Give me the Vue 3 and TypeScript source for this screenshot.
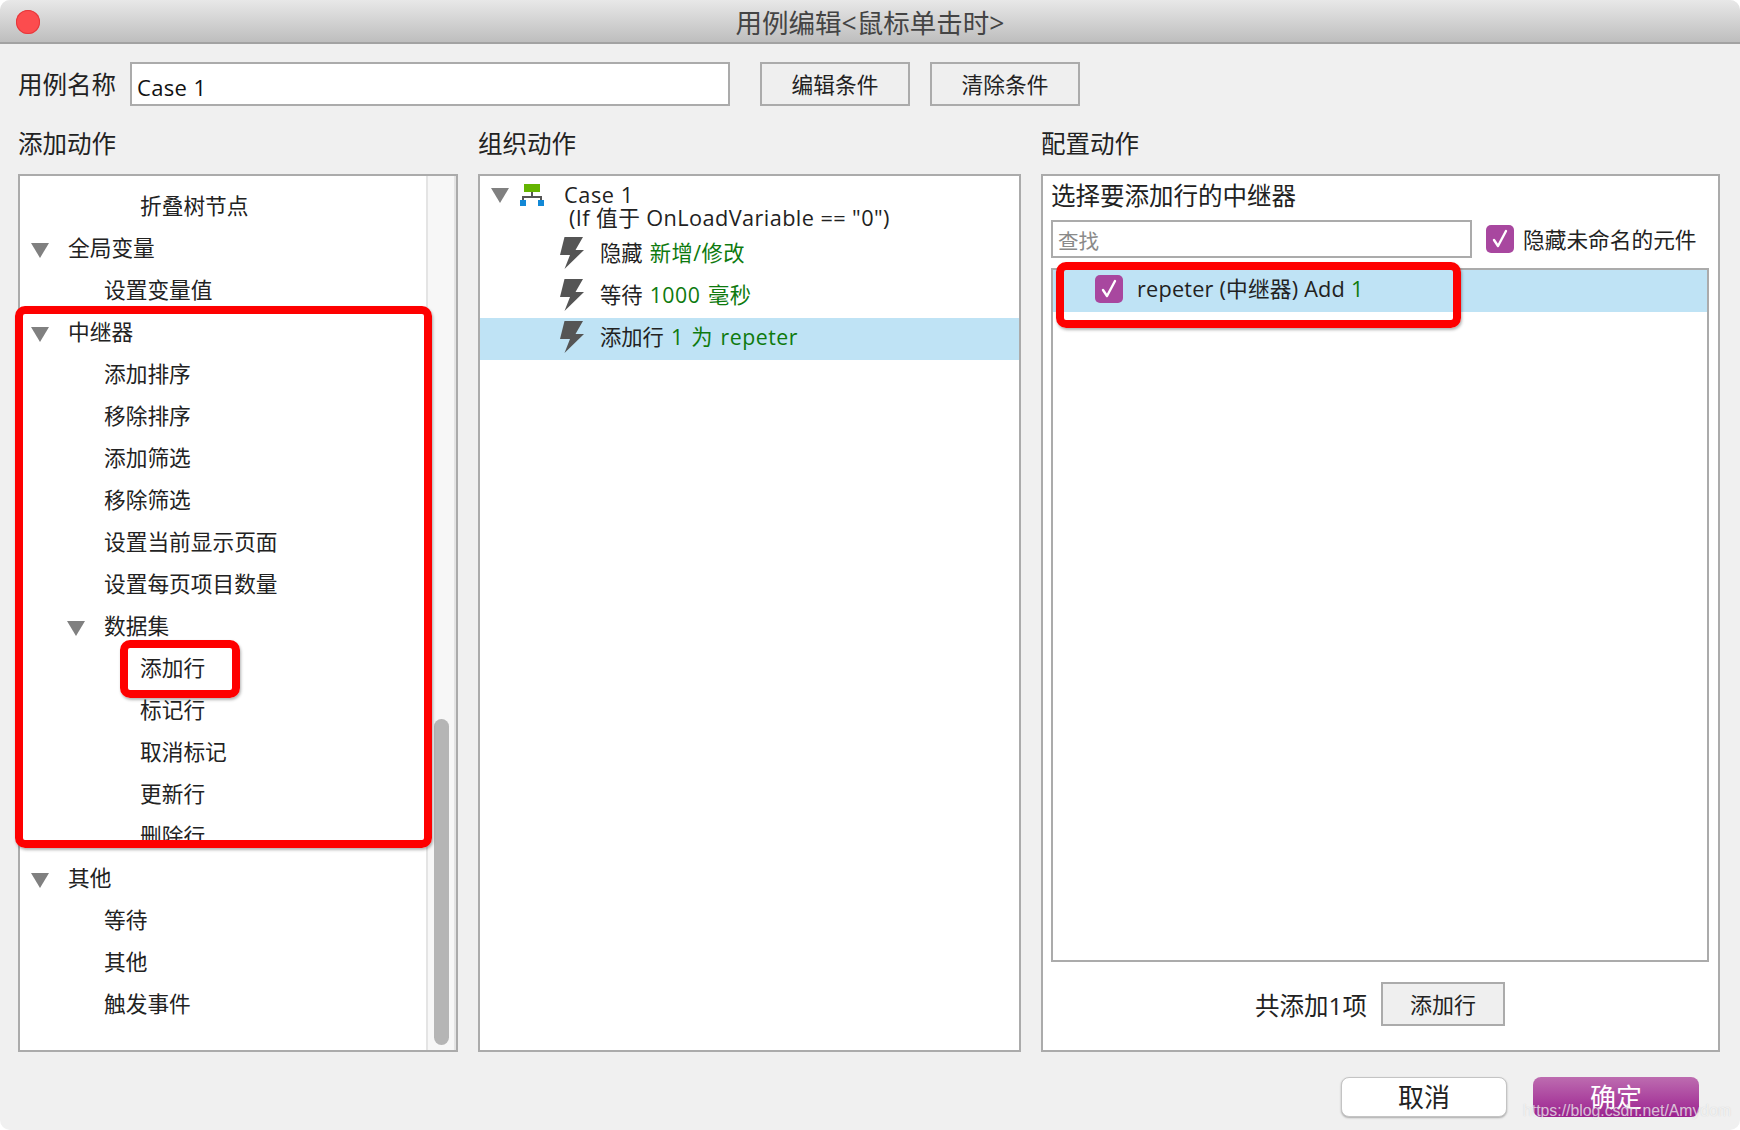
<script setup lang="ts">
interface TreeRow {
  label: string;
  level: number;
  open?: boolean;
}

const treeRows: TreeRow[] = [
  { label: "折叠树节点", level: 2 },
  { label: "全局变量", level: 0, open: true },
  { label: "设置变量值", level: 1 },
  { label: "中继器", level: 0, open: true },
  { label: "添加排序", level: 1 },
  { label: "移除排序", level: 1 },
  { label: "添加筛选", level: 1 },
  { label: "移除筛选", level: 1 },
  { label: "设置当前显示页面", level: 1 },
  { label: "设置每页项目数量", level: 1 },
  { label: "数据集", level: 1, open: true },
  { label: "添加行", level: 2 },
  { label: "标记行", level: 2 },
  { label: "取消标记", level: 2 },
  { label: "更新行", level: 2 },
  { label: "删除行", level: 2 },
  { label: "其他", level: 0, open: true },
  { label: "等待", level: 1 },
  { label: "其他", level: 1 },
  { label: "触发事件", level: 1 },
];

const actions = [
  { verb: "隐藏", target: "新增/修改", selected: false },
  { verb: "等待", target: "1000 毫秒", selected: false },
  { verb: "添加行", target: "1 为 repeter", selected: true },
];
</script>

<template>
  <div class="dialog">
    <header class="titlebar">
      <span class="close-dot"></span>
      <span class="title">用例编辑&lt;鼠标单击时&gt;</span>
    </header>

    <div class="name-row">
      <label class="name-label">用例名称</label>
      <div class="field name-field">Case 1</div>
      <button class="btn btn-edit">编辑条件</button>
      <button class="btn btn-clear">清除条件</button>
    </div>

    <div class="columns">
      <section class="col col-add">
        <h2>添加动作</h2>
        <div class="panel tree-panel">
          <ul class="tree">
            <li v-for="(row, i) in treeRows" :key="i" class="tree-row" :class="`level-${row.level}`">
              <i v-if="row.open" class="caret"></i>
              <span>{{ row.label }}</span>
            </li>
          </ul>
          <div class="scroll-track"><div class="scroll-thumb"></div></div>
        </div>
      </section>

      <section class="col col-organize">
        <h2>组织动作</h2>
        <div class="panel organize-panel">
          <div class="case-row">
            <i class="caret"></i>
            <svg class="case-icon" width="24" height="22" viewBox="0 0 24 22">
              <rect x="4" y="0" width="16" height="8" fill="#64b400" />
              <path d="M12 8v5M3 16v-3h18v3" fill="none" stroke="#555" stroke-width="2" />
              <rect x="0" y="16" width="6" height="6" fill="#1288d6" />
              <rect x="18" y="16" width="6" height="6" fill="#1288d6" />
            </svg>
            <div class="case-text">
              <div class="case-name">Case 1</div>
              <div class="case-cond">(If 值于 OnLoadVariable == "0")</div>
            </div>
          </div>
          <div v-for="a in actions" :key="a.verb" class="action-row" :class="{ selected: a.selected }">
            <svg class="bolt" width="24" height="32" viewBox="0 0 24 32">
              <path d="M4.5 0H23L15.5 13H24L4.5 32L10 18H0Z" fill="#555" />
            </svg>
            <span class="action-text">{{ a.verb }} <em>{{ a.target }}</em></span>
          </div>
        </div>
      </section>

      <section class="col col-config">
        <h2>配置动作</h2>
        <div class="panel config-panel">
          <div class="config-title">选择要添加行的中继器</div>
          <div class="search-row">
            <div class="field search-field">查找</div>
            <span class="check">
              <svg width="18" height="20" viewBox="0 0 18 20"><path d="M3 11l4 6L15 2" fill="none" stroke="#fff" stroke-width="2.4" stroke-linecap="round" stroke-linejoin="round" /></svg>
            </span>
            <span class="check-label">隐藏未命名的元件</span>
          </div>
          <div class="widget-list">
            <div class="widget-row">
              <span class="check">
                <svg width="18" height="20" viewBox="0 0 18 20"><path d="M3 11l4 6L15 2" fill="none" stroke="#fff" stroke-width="2.4" stroke-linecap="round" stroke-linejoin="round" /></svg>
              </span>
              <span class="widget-text">repeter (中继器) Add <em>1</em></span>
            </div>
          </div>
          <div class="config-foot">
            <span>共添加1项</span>
            <button class="btn btn-add-row">添加行</button>
          </div>
        </div>
      </section>
    </div>

    <footer class="actions">
      <button class="mac-btn cancel">取消</button>
      <button class="mac-btn ok">确定</button>
    </footer>

    <div class="mark mark-repeater"></div>
    <div class="mark mark-addrow"></div>
    <div class="mark mark-widget"></div>
    <div class="watermark">https://blog.csdn.net/Amydom</div>
  </div>
</template>

<style>
html,
body {
  margin: 0;
  background: #fff;
  overflow: hidden;
}
</style>

<style scoped>
.dialog {
  position: relative;
  width: 1740px;
  height: 1130px;
  box-sizing: border-box;
  background: #f0f0f0;
  border-radius: 10px;
  overflow: hidden;
  font-family: "Open Sans", "Noto Sans CJK SC", sans-serif;
  font-size: 21.7px;
  color: #222;
}

.titlebar {
  height: 44px;
  box-sizing: border-box;
  display: flex;
  align-items: center;
  justify-content: center;
  position: relative;
  background: linear-gradient(#e8e8e8, #bebebe);
  border-bottom: 2px solid #a2a2a2;
}

.close-dot {
  position: absolute;
  left: 16px;
  top: 10px;
  width: 24px;
  height: 24px;
  border-radius: 50%;
  background: #fc4c4e;
  box-shadow: inset 0 0 0 1px #e5383b;
}

.title {
  padding-top: 4px;
  font-size: 26.5px;
  line-height: 36px;
  color: #444;
}

.name-row {
  display: flex;
  align-items: center;
  height: 44px;
  margin-top: 18px;
  padding-left: 18px;
}

.name-label {
  width: 112px;
  margin-top: -2px;
  font-size: 24.5px;
}

.field {
  box-sizing: border-box;
  background: #fff;
  border: 2px solid #ababab;
}

.name-field {
  width: 600px;
  height: 44px;
  padding: 7px 0 0 5px;
  font-size: 22px;
  letter-spacing: 0.35px;
  line-height: 32px;
  color: #111;
}

.btn {
  box-sizing: border-box;
  background: #efefef;
  border: 2px solid #ababab;
  font: inherit;
  color: #222;
  padding: 0 0 2px;
}

.btn-edit {
  width: 150px;
  height: 44px;
  margin-left: 30px;
}

.btn-clear {
  width: 150px;
  height: 44px;
  margin-left: 20px;
}

.columns {
  display: flex;
  margin-top: 18px;
  padding-left: 18px;
}

.col h2 {
  margin: 0 0 12px;
  height: 38px;
  font-size: 24.5px;
  font-weight: 400;
  line-height: 40px;
}

.col-add {
  width: 440px;
}

.col-organize {
  width: 543px;
  margin-left: 20px;
}

.col-config {
  width: 679px;
  margin-left: 20px;
}

.panel {
  box-sizing: border-box;
  height: 878px;
  background: #fff;
  border: 2px solid #ababab;
}

.tree-panel {
  display: flex;
}

.tree {
  flex: 1;
  list-style: none;
  margin: 0;
  padding: 9px 0 0;
  overflow: hidden;
}

.tree-row {
  position: relative;
  height: 42px;
  line-height: 42px;
  white-space: nowrap;
}

.level-0 {
  padding-left: 48px;
}

.level-1 {
  padding-left: 84px;
}

.level-2 {
  padding-left: 120px;
}

.caret {
  display: block;
  width: 0;
  height: 0;
  border-left: 9px solid transparent;
  border-right: 9px solid transparent;
  border-top: 15px solid #808080;
}

.tree-row .caret {
  position: absolute;
  top: 16px;
  left: 11px;
}

.level-1 .caret {
  left: 47px;
}

.scroll-track {
  width: 30px;
  box-sizing: border-box;
  display: flex;
  align-items: flex-end;
  justify-content: center;
  padding-bottom: 5px;
  background: #f7f7f7;
  border-left: 2px solid #e4e4e4;
  border-right: 2px solid #e4e4e4;
}

.scroll-thumb {
  width: 15px;
  height: 326px;
  border-radius: 8px;
  background: #b5b5b5;
}

.case-row {
  position: relative;
  height: 58px;
  box-sizing: border-box;
  padding-left: 84px;
}

.case-row .caret {
  position: absolute;
  left: 11px;
  top: 12px;
}

.case-icon {
  position: absolute;
  left: 40px;
  top: 8px;
}

.case-text {
  padding-top: 7px;
  line-height: 23px;
}

.case-name {
  letter-spacing: 0.6px;
}

.case-cond {
  padding-left: 5px;
  letter-spacing: 0.42px;
}

.action-row {
  display: flex;
  align-items: center;
  height: 42px;
  padding-left: 80px;
  gap: 16px;
  font-size: 21.3px;
}

.action-row.selected {
  background: #bfe3f5;
}

.bolt {
  flex: none;
  margin-top: -4px;
}

.action-text {
  padding-bottom: 7px;
  word-spacing: 1.5px;
}

.action-text em {
  letter-spacing: 0.5px;
}

em {
  font-style: normal;
  color: #0e7a0e;
}

.config-panel {
  display: flex;
  flex-direction: column;
  padding: 2px 8px 0;
}

.config-title {
  height: 36px;
  line-height: 36px;
  font-size: 24.5px;
}

.search-row {
  display: flex;
  align-items: center;
  height: 38px;
  margin-top: 6px;
}

.search-field {
  width: 421px;
  height: 38px;
  padding-left: 5px;
  line-height: 38px;
  font-size: 20.5px;
  color: #8a8a8a;
}

.check {
  display: flex;
  flex: none;
  align-items: center;
  justify-content: center;
  width: 28px;
  height: 28px;
  border-radius: 5px;
  background: #a8479f;
}

.search-row .check {
  margin: 0 9px 0 14px;
}

.check-label {
  padding-bottom: 2px;
}

.widget-list {
  width: 658px;
  height: 694px;
  box-sizing: border-box;
  margin-top: 10px;
  border: 2px solid #ababab;
}

.widget-row {
  display: flex;
  align-items: center;
  height: 42px;
  box-sizing: border-box;
  padding: 0 0 4px 42px;
  gap: 14px;
  background: #bfe3f5;
}

.widget-text {
  padding-bottom: 3px;
  letter-spacing: 0.2px;
}

.config-foot {
  display: flex;
  align-items: center;
  margin-top: 20px;
  padding-left: 204px;
  gap: 14px;
  font-size: 24.5px;
}

.btn-add-row {
  width: 124px;
  height: 44px;
  font-size: 22px;
}

.actions {
  display: flex;
  justify-content: flex-end;
  gap: 26px;
  padding: 25px 41px 0 0;
}

.mac-btn {
  box-sizing: border-box;
  width: 166px;
  height: 40px;
  padding: 0;
  border-radius: 8px;
  font: inherit;
  font-size: 26px;
  line-height: 36px;
}

.cancel {
  background: #fff;
  border: 1px solid #c4c4c4;
  box-shadow: 0 1px 2px rgba(0, 0, 0, 0.3);
  color: #222;
}

.ok {
  background: linear-gradient(#bd6cb0, #9c2290);
  border: 0;
  color: #fff;
}

.mark {
  position: absolute;
  box-sizing: border-box;
  border: 8px solid #fe0000;
  border-radius: 10px;
  box-shadow: 1px 2px 3px rgba(0, 0, 0, 0.3);
}

.mark-repeater {
  left: 15px;
  top: 306px;
  width: 417px;
  height: 542px;
}

.mark-addrow {
  left: 120px;
  top: 640px;
  width: 120px;
  height: 58px;
}

.mark-widget {
  left: 1056px;
  top: 262px;
  width: 405px;
  height: 66px;
}

.watermark {
  position: absolute;
  left: 1523px;
  top: 1100px;
  font-family: "Liberation Sans", sans-serif;
  font-size: 15.8px;
  line-height: 22px;
  color: rgba(255, 255, 255, 0.68);
  text-shadow: 0 0 1px rgba(120, 120, 120, 0.3);
}
</style>
